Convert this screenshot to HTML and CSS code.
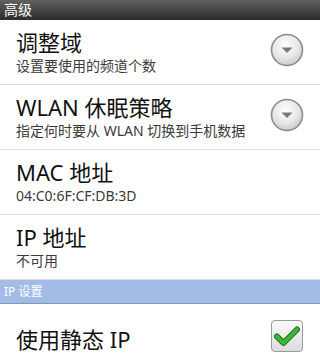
FILE: index.html
```html
<!DOCTYPE html>
<html lang="zh">
<head>
<meta charset="utf-8">
<link rel="stylesheet" href="styles.css">
</head>
<body>
<div class="screen">
  <div class="header">高级</div>
  <div class="row">
    <div class="text">
      <div class="title">调整域</div>
      <div class="sub">设置要使用的频道个数</div>
    </div>
    <span class="spinner"><svg width="34" height="34" viewBox="0 0 34 34"><defs><radialGradient id="g1" cx="45%" cy="35%" r="70%"><stop offset="0" stop-color="#ffffff"/><stop offset="0.6" stop-color="#e6e6e6"/><stop offset="1" stop-color="#c4c4c4"/></radialGradient></defs><circle cx="17" cy="17" r="15.5" fill="url(#g1)" stroke="#8c8c8c" stroke-width="1.6"/><path d="M11.5 14.5 H22.5 L17 20 Z" fill="#7a7a7a"/></svg></span>
  </div>
  <div class="row">
    <div class="text">
      <div class="title">WLAN 休眠策略</div>
      <div class="sub">指定何时要从 WLAN 切换到手机数据</div>
    </div>
    <span class="spinner"><svg width="34" height="34" viewBox="0 0 34 34"><circle cx="17" cy="17" r="15.5" fill="url(#g1)" stroke="#8c8c8c" stroke-width="1.6"/><path d="M11.5 14.5 H22.5 L17 20 Z" fill="#7a7a7a"/></svg></span>
  </div>
  <div class="row">
    <div class="text">
      <div class="title">MAC 地址</div>
      <div class="sub">04:C0:6F:CF:DB:3D</div>
    </div>
  </div>
  <div class="row">
    <div class="text">
      <div class="title">IP 地址</div>
      <div class="sub">不可用</div>
    </div>
  </div>
  <div class="section">IP 设置</div>
  <div class="row single">
    <div class="text">
      <div class="title">使用静态 IP</div>
    </div>
    <span class="check"><svg width="26" height="22" viewBox="0 0 26 22"><path d="M3 11.5 L9.5 18 L23 4.5" fill="none" stroke="#1f7a1f" stroke-width="6" stroke-linecap="round" stroke-linejoin="round"/><path d="M3 11.5 L9.5 18 L23 4.5" fill="none" stroke="#3cb83c" stroke-width="3.6" stroke-linecap="round" stroke-linejoin="round"/></svg></span>
  </div>
</div>
</body>
</html>
```
FILE: styles.css
```css
html, body {
  margin: 0;
  padding: 0;
  background: #ffffff;
}
.screen {
  width: 320px;
  height: 364px;
  overflow: hidden;
  font-family: "Noto Sans", "Noto Sans CJK SC", sans-serif;
  background: #ffffff;
}
.header {
  height: 20px;
  line-height: 19px;
  padding-left: 4px;
  font-size: 14px;
  color: #ffffff;
  background: linear-gradient(#616161, #2c2c2c);
}
.row {
  display: flex;
  align-items: center;
  height: 64px;
  padding: 0 17px 0 16px;
  border-bottom: 1px solid #dedede;
  box-sizing: content-box;
}
.text {
  flex: 1;
  min-width: 0;
}
.title {
  font-size: 22px;
  line-height: 28px;
  color: #111111;
  white-space: nowrap;
}
.sub {
  font-size: 14px;
  line-height: 20px;
  color: #3a3a3a;
  white-space: nowrap;
}
.spinner {
  display: flex;
  width: 34px;
  height: 34px;
  margin-right: -1px;
  margin-bottom: 4px;
}
.section {
  height: 23px;
  line-height: 23px;
  padding-left: 4px;
  font-size: 12px;
  color: #ffffff;
  background: #a2bce6;
  border-bottom: 1px solid #8396bd;
}
.single {
  border-bottom: none;
}
.single .title {
  margin-top: 6px;
}
.check {
  display: flex;
  align-items: center;
  justify-content: center;
  width: 30px;
  height: 30px;
  border: 1px solid #9a9a9a;
  border-radius: 4px;
  background: linear-gradient(#fafafa, #dcdcdc);
  margin-top: 0;
}
```
